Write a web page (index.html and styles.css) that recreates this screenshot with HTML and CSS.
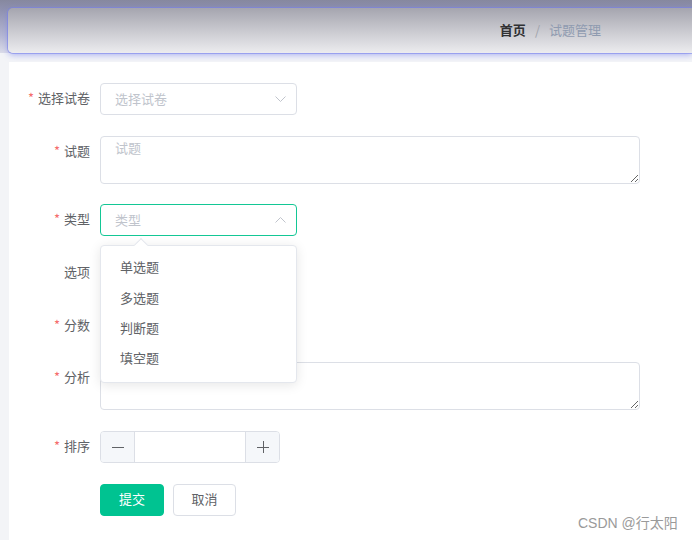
FILE: index.html
```html
<!DOCTYPE html>
<html lang="zh">
<head>
<meta charset="utf-8">
<title>试题管理</title>
<link rel="stylesheet" href="styles.css">
</head>
<body>
<div class="top">
  <div class="header">
    <div class="crumbs">
      <span class="crumb-home">首页</span><span class="crumb-sep">/</span><span class="crumb-cur">试题管理</span>
    </div>
  </div>
</div>
<div class="main">
  <div class="row">
    <div class="label"><span class="star">*</span>选择试卷</div>
    <div class="select">
      <span class="placeholder">选择试卷</span>
      <svg class="arrow" width="11" height="6" viewBox="0 0 11 6"><path d="M0.5 0.5 L5.5 5.5 L10.5 0.5" fill="none" stroke="#c0c4cc" stroke-width="1"/></svg>
    </div>
  </div>
  <div class="row">
    <div class="label"><span class="star">*</span>试题</div>
    <textarea class="textarea" placeholder="试题"></textarea>
  </div>
  <div class="row">
    <div class="label"><span class="star">*</span>类型</div>
    <div class="select-wrap">
      <div class="select active">
        <span class="placeholder">类型</span>
        <svg class="arrow" width="11" height="6" viewBox="0 0 11 6"><path d="M0.5 5.5 L5.5 0.5 L10.5 5.5" fill="none" stroke="#c0c4cc" stroke-width="1"/></svg>
      </div>
      <div class="dropdown">
        <div class="pop-arrow"></div>
        <div class="option">单选题</div>
        <div class="option">多选题</div>
        <div class="option">判断题</div>
        <div class="option">填空题</div>
      </div>
    </div>
  </div>
  <div class="row">
    <div class="label">选项</div>
    <div class="empty"></div>
  </div>
  <div class="row">
    <div class="label"><span class="star">*</span>分数</div>
    <div class="empty"></div>
  </div>
  <div class="row">
    <div class="label"><span class="star">*</span>分析</div>
    <textarea class="textarea"></textarea>
  </div>
  <div class="row">
    <div class="label"><span class="star">*</span>排序</div>
    <div class="number">
      <span class="num-btn minus"><svg width="14" height="14" viewBox="0 0 14 14"><path d="M1 7.5 H13" stroke="#606266" stroke-width="1"/></svg></span>
      <span class="num-field"></span>
      <span class="num-btn plus"><svg width="14" height="14" viewBox="0 0 14 14"><path d="M1 7.5 H13 M7.5 1 V13" stroke="#606266" stroke-width="1"/></svg></span>
    </div>
  </div>
  <div class="row">
    <div class="label"></div>
    <div class="buttons">
      <button class="btn primary">提交</button>
      <button class="btn">取消</button>
    </div>
  </div>
  <div class="watermark">CSDN @行太阳</div>
</div>
</body>
</html>
```

FILE: styles.css
```css
* { box-sizing: border-box; }
html, body { margin: 0; height: 100%; }
body {
  background: #f3f4f7;
  font-family: "Noto Sans CJK SC", "Noto Sans", sans-serif;
  font-size: 13px;
  color: #606266;
  overflow: hidden;
}
.top {
  padding: 8px 0 0 8px;
  background: linear-gradient(to bottom, #86889f 0px, #9092b0 10px, #b4b6d2 35px, #e6e7f0 58px, #f3f4f7 62px);
}
.header {
  height: 45px;
  border-radius: 5px 0 0 5px;
  background: linear-gradient(to bottom, #a5a5af 0%, #c9c9cf 50%, #ececef 100%);
  box-shadow: 0 0 0 1px rgba(120, 130, 235, 0.55), 0 2px 6px rgba(110, 120, 235, 0.55);
  display: flex;
  justify-content: flex-end;
  align-items: center;
  padding-right: 91px;
  padding-bottom: 2px;
}
.crumbs { font-size: 13px; line-height: 1; }
.crumb-home { color: #303133; font-weight: bold; }
.crumb-sep { color: #a0a3ab; margin: 0 9px; }
.crumb-cur { color: #8f9bb0; }
.main {
  margin: 9px 0 0 9px;
  background: #fff;
  padding-top: 21px;
  height: 500px;
  position: relative;
}
.row {
  display: flex;
  align-items: flex-start;
  margin-bottom: 20.7px;
}
.label {
  width: 91px;
  flex: none;
  text-align: right;
  padding-right: 10px;
  line-height: 29px;
  color: #606266;
}
.star { color: #f56c6c; margin-right: 4px; }
.select {
  width: 197px;
  height: 32px;
  border: 1px solid #dcdfe6;
  border-radius: 4px;
  display: flex;
  align-items: center;
  justify-content: space-between;
  padding: 0 10px 2px 14px;
  background: #fff;
}
.select .arrow { margin-top: 2px; }
.select.active { border-color: #13c795; }
.placeholder { color: #c0c4cc; }
.arrow { display: block; }
.select-wrap { position: relative; }
.textarea {
  width: 540px;
  height: 48px;
  border: 1px solid #dcdfe6;
  border-radius: 4px;
  padding: 1px 14px;
  font-family: inherit;
  font-size: 13px;
  line-height: 1.5;
  color: #606266;
  outline: none;
  display: block;
  margin: 0;
}
.textarea::placeholder { color: #c0c4cc; }
.empty { height: 32px; }
.dropdown {
  position: absolute;
  top: 41px;
  left: 0;
  width: 197px;
  padding: 6px 0 8px;
  background: #fff;
  border: 1px solid #e4e7ed;
  border-radius: 4px;
  box-shadow: 0 2px 12px rgba(0, 0, 0, 0.1);
  z-index: 10;
}
.pop-arrow {
  position: absolute;
  top: -6px;
  left: 35px;
  width: 10px;
  height: 10px;
  background: #fff;
  border-left: 1px solid #e4e7ed;
  border-top: 1px solid #e4e7ed;
  transform: rotate(45deg);
}
.option {
  height: 30.3px;
  line-height: 30px;
  padding: 0 19px;
  color: #606266;
  font-size: 13px;
}
.number {
  width: 180px;
  height: 32px;
  border: 1px solid #dcdfe6;
  border-radius: 4px;
  display: flex;
  overflow: hidden;
}
.num-btn {
  width: 34px;
  flex: none;
  background: #f5f7fa;
  display: flex;
  align-items: center;
  justify-content: center;
}
.num-btn svg { display: block; }
.minus { border-right: 1px solid #dcdfe6; }
.plus { border-left: 1px solid #dcdfe6; }
.num-field { flex: 1; background: #fff; }
.buttons { display: flex; gap: 9px; }
.btn {
  height: 32px;
  width: 63px;
  border: 1px solid #dcdfe6;
  border-radius: 4px;
  background: #fff;
  color: #606266;
  font-family: inherit;
  font-size: 13px;
  padding: 0 0 2px;
}
.btn.primary {
  width: 64px;
  background: #00c391;
  border-color: #00c391;
  color: #fff;
}
.watermark {
  position: absolute;
  left: 569px;
  top: 450px;
  color: #9a9a9a;
  font-size: 14px;
  font-family: "Liberation Sans", "Noto Sans CJK SC", sans-serif;
}
```
